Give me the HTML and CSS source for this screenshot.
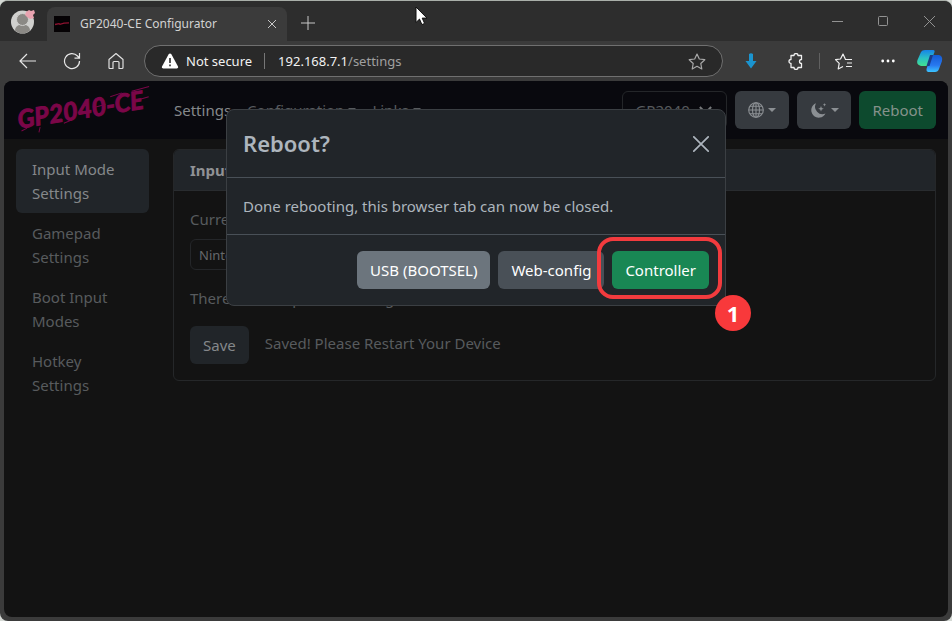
FILE: index.html
```html
<!DOCTYPE html>
<html lang="en">
<head>
<meta charset="utf-8">
<title>GP2040-CE Configurator</title>
<link rel="stylesheet" href="styles.css">
</head>
<body>
<div class="window">
  <header class="tabstrip">
    <button class="profile" aria-label="Profile">
      <svg width="26" height="26" viewBox="0 0 26 26"><circle cx="11.500" cy="14" r="11.500" fill="#d0d0ce"/><path d="M4 22.500c0-8 15-8 15 0-4 4-11 4-15 0z" fill="#8b8985"/><circle cx="11.500" cy="11.500" r="6" fill="#8b8985" stroke="#d0d0ce"/><path d="M15 4l3-2 2 1 3-1 1 3-2 2 1 3-4 1-3-2-2-2z" fill="#e9a3b0"/></svg>
    </button>
    <div class="tab">
      <svg class="favicon" width="16" height="16" viewBox="0 0 16 16"><rect width="16" height="16" fill="#050204"/><path d="M1 8.500l4-.8 1 .7 4-1.200 5-.4" stroke="#8e1230" stroke-width="1.300" fill="none"/></svg>
      <span class="tab-title">GP2040-CE Configurator</span>
      <button class="tab-close" aria-label="Close tab"><svg width="10" height="10" viewBox="0 0 10 10"><path d="M1 1l8 8M9 1l-8 8" stroke="#c8c8c8" fill="none"/></svg></button>
    </div>
    <button class="new-tab" aria-label="New tab"><svg width="14" height="14" viewBox="0 0 14 14"><path d="M7 0v14M0 7h14" stroke="#c8c8c8" fill="none"/></svg></button>
    <div class="caption">
      <button aria-label="Minimize"><svg width="11" height="11" viewBox="0 0 11 11"><path d="M0 5.500h11" stroke="#929292"/></svg></button>
      <button aria-label="Maximize"><svg width="11" height="11" viewBox="0 0 11 11"><rect x=".5" y=".5" width="9" height="9" rx="1" fill="none" stroke="#929292"/></svg></button>
      <button aria-label="Close"><svg width="11" height="11" viewBox="0 0 11 11"><path d="M0 0l11 11M11 0L0 11" stroke="#929292"/></svg></button>
    </div>
  </header>
  <div class="toolbar">
    <button aria-label="Back"><svg width="18" height="16" viewBox="0 0 18 16"><path d="M17 8H1.500M8 1L1 8l7 7" fill="none" stroke="#e6e6e6" stroke-width="1.200"/></svg></button>
    <button aria-label="Refresh"><svg width="18" height="18" viewBox="0 0 18 18"><path d="M16.500 9A7.500 7.500 0 1 1 14.500 4L16.300 6M16.500 1v5.200h-5" fill="none" stroke="#e6e6e6" stroke-width="1.200"/></svg></button>
    <button aria-label="Home"><svg width="16" height="18" viewBox="0 0 16 18"><path d="M1 7.500L8 1.500l7 6v8q0 1-1 1h-3v-6q0-1-1-1H6q-1 0-1 1v6H2q-1 0-1-1z" fill="none" stroke="#e0e0e0" stroke-width="1.200" stroke-linejoin="round"/></svg></button>
    <div class="address">
      <svg width="18" height="16" viewBox="0 0 18 16"><path d="M7.500 1.500q1.500-2 3 0l6.500 12q.7 1.800-1.200 2H2.200Q.3 15.300 1 13.500z" fill="#fff"/><path d="M9 5v5M9 11.500v1.700" stroke="#292929" stroke-width="1.600"/></svg>
      <span class="secure">Not secure</span>
      <span class="url">192.168.7.1<span class="path">/settings</span></span>
      <svg class="star" width="18" height="17" viewBox="0 0 18 17"><path d="M9 1l2.300 5 5.500.7-4 3.800 1 5.500L9 13.300 4.200 16l1-5.500-4-3.800 5.500-.7z" fill="none" stroke="#a8a8a8" stroke-width="1.200" stroke-linejoin="round"/></svg>
    </div>
    <button aria-label="Downloads"><svg width="12" height="16" viewBox="0 0 12 16"><path d="M4 1q2-1.500 4 0v7h3.500L6 15.500.5 8H4z" fill="#1b94cf"/></svg></button>
    <button aria-label="Extensions"><svg width="17" height="17" viewBox="0 0 17 17"><path d="M4 2.500h3a2 2 0 0 1 4 0h3.500v4a2 2 0 0 0 0 4v4H11a2 2 0 0 1-4 0H4v-4a2 2 0 0 1 0-4z" fill="none" stroke="#f0f0f0" stroke-width="1.300" stroke-linejoin="round"/></svg></button>
    <span class="divider"></span>
    <button aria-label="Favorites"><svg width="18" height="17" viewBox="0 0 18 17"><path d="M11 6.500h-.5L8 1 5.500 6l-5 .7 3.700 3.700-1 5.600L8 13.500M11 6.500h6M12 10h5M11 13.500h6" fill="none" stroke="#f0f0f0" stroke-width="1.200" stroke-linejoin="round"/></svg></button>
    <button aria-label="Menu"><svg width="14" height="4" viewBox="0 0 14 4"><g fill="#fff"><circle cx="1.700" cy="2" r="1.400"/><circle cx="7" cy="2" r="1.400"/><circle cx="12.300" cy="2" r="1.400"/></g></svg></button>
    <button class="copilot" aria-label="Copilot"><svg width="26" height="24" viewBox="0 0 26 24"><defs><linearGradient id="ca" x1="0" y1="0" x2="0" y2="1"><stop offset="0" stop-color="#1683e8"/><stop offset=".5" stop-color="#2abfc6"/><stop offset="1" stop-color="#42e08f"/></linearGradient><linearGradient id="cb" x1="0" y1="0" x2="0" y2="1"><stop offset="0" stop-color="#145bd4"/><stop offset=".6" stop-color="#2878ef"/><stop offset="1" stop-color="#3bc4ff"/></linearGradient></defs><path d="M8 1h8q2 0 1.500 2L13 15q-.8 2-3 2H4q-5-1-3.500-6L4 3q1-2 4-2z" fill="url(#ca)"/><path d="M17 6h5q4 1 3 6l-3 8q-1 3-4 3h-7q-2-.5-1.500-3L13 9q1-3 4-3z" fill="url(#cb)"/><path d="M13 6h3l-3.500 11h-3z" fill="#1b3c86"/></svg></button>
  </div>
  <div class="page">
    <nav class="navbar">
      <a class="logo" href="#" aria-label="GP2040-CE home"><svg width="138" height="44" viewBox="0 0 138 44"><g transform="rotate(-9 68 22)"><text x="1" y="30">GP2040-CE</text><path d="M3 33l6-2M22 32l-2 5M96 13l12-2M118 11l18-2M46 32l8-2M119 21l15-2M78 21l12-1"/></g></svg></a>
      <a class="nav-link current" href="#">Settings</a>
      <a class="nav-link" href="#">Configuration<i class="caret"></i></a>
      <a class="nav-link" href="#">Links<i class="caret"></i></a>
      <div class="nav-tools">
        <label class="select board"><select aria-label="Board"><option>GP2040</option></select></label>
        <button class="btn tool" aria-label="Language"><svg width="16" height="16" viewBox="0 0 16 16"><g fill="none" stroke="#8b8f93" stroke-width="1.100"><circle cx="8" cy="8" r="7.300"/><ellipse cx="8" cy="8" rx="3.500" ry="7.300"/><path d="M8 .7v14.600M.7 8h14.600M2 4.300h12M2 11.700h12"/></g></svg><i class="caret"></i></button>
        <button class="btn tool" aria-label="Theme"><svg width="17" height="17" viewBox="0 0 17 17"><path d="M6 1.200a7.500 7.500 0 1 0 9.500 10.300A7.400 7.400 0 0 1 6 1.200z" fill="#8b8f93"/><path d="M11 4l.8 2 2 .8-2 .8-.8 2-.8-2-2-.8 2-.8zM14.500 1l.5 1.300 1.300.5-1.300.5-.5 1.300-.5-1.300-1.300-.5 1.300-.5z" fill="#8b8f93"/></svg><i class="caret"></i></button>
        <button class="btn reboot">Reboot</button>
      </div>
    </nav>
    <main class="content">
      <nav class="sidebar">
        <a class="active" href="#">Input Mode Settings</a>
        <a href="#">Gamepad Settings</a>
        <a href="#">Boot Input Modes</a>
        <a href="#">Hotkey Settings</a>
      </nav>
      <section class="card">
        <h2>Input Mode Settings</h2>
        <form class="card-body">
          <label for="mode">Current Input Mode</label>
          <div class="select mode"><select id="mode"><option>Nintendo Switch</option></select></div>
          <p>There are no optional settings</p>
          <div class="save-row"><button class="btn save" type="button">Save</button><span>Saved! Please Restart Your Device</span></div>
        </form>
      </section>
    </main>
    <div class="modal" role="dialog" aria-labelledby="modal-title">
      <div class="modal-header">
        <h1 id="modal-title">Reboot?</h1>
        <button class="modal-close" aria-label="Close"><svg width="16" height="16" viewBox="0 0 16 16"><path d="M.8.8l14.400 14.400M15.200.8L.8 15.200" stroke="#adb5bd" stroke-width="1.700" stroke-linecap="round"/></svg></button>
      </div>
      <div class="modal-body">Done rebooting, this browser tab can now be closed.</div>
      <div class="modal-footer">
        <button class="btn usb">USB (BOOTSEL)</button>
        <button class="btn web">Web-config</button>
        <div class="marked">
          <button class="btn controller">Controller</button>
          <span class="ring"></span>
          <span class="step">1</span>
        </div>
      </div>
    </div>
  </div>
  <svg class="pointer" width="13" height="20" viewBox="0 0 13 20"><path d="M1 1v15.500l3.500-3.400 2.400 5.500 2.700-1.200-2.400-5.300H12z" fill="#fff" stroke="#111" stroke-width="1"/></svg>
</div>
</body>
</html>
```
FILE: styles.css
```css
* { box-sizing: border-box; }
body {
  margin: 0;
  background: #d5d9d5;
  font: 15px/24px "Noto Sans", sans-serif;
}
button, select { font: inherit; color: inherit; border: 0; padding: 0; background: none; }
a { color: inherit; text-decoration: none; }
svg { display: block; flex: none; }

.window {
  position: relative;
  display: flex;
  flex-direction: column;
  min-height: 100vh;
  padding: 0 4px 4px;
  background: #3b3b3b;
  border-top: 1px solid #a9afa9;
  border-radius: 8px;
  overflow: hidden;
}

.tabstrip {
  display: flex;
  align-items: stretch;
  height: 40px;
  margin: 0 -4px;
  padding-left: 11px;
  background: #2d2d2d;
}
.profile { width: 36px; }
.tab {
  display: flex;
  align-items: center;
  width: 240px;
  margin-top: 6px;
  padding: 0 10px 0 7px;
  background: #3b3b3b;
  border-radius: 8px 8px 0 0;
  color: #d2d2d2;
  font-size: 12px;
}
.tab-title { flex: 1; padding-left: 10px; white-space: nowrap; }
.new-tab { width: 42px; display: grid; place-items: center; padding-top: 4px; }
.caption { display: flex; margin-left: auto; }
.caption button { width: 46px; display: grid; place-items: center; }

.toolbar { display: flex; align-items: center; height: 40px; margin: 0 -2px; padding-left: 4px; }
.toolbar button { flex: none; width: 44px; height: 40px; display: grid; place-items: center; }
.toolbar .copilot { width: 40px; }
.divider { width: 1px; height: 16px; margin: 0 2px; background: #606060; }
.address {
  flex: 1;
  display: flex;
  align-items: center;
  height: 32px;
  margin: 0 6px;
  padding: 0 16px;
  background: #292929;
  border: 1px solid #707070;
  border-radius: 16px;
  color: #f2f2f2;
  font-size: 13px;
  line-height: 16px;
}
.secure { margin-left: 7px; padding-right: 12px; border-right: 1px solid #777; }
.url { flex: 1; padding-left: 13px; }
.path { color: #a0a0a0; }

.page {
  position: relative;
  flex: 1;
  background: #131313;
  border-radius: 8px;
  color: #585b5e;
}
.btn { height: 38px; padding: 0 13px; border-radius: 6px; white-space: nowrap; }
.navbar {
  display: flex;
  align-items: center;
  height: 58px;
  padding: 0 12px;
  background: #09090e;
  border-radius: 8px 8px 0 0;
}
.logo { width: 158px; }
.logo svg { overflow: visible; }
.logo text { font: italic 700 25px Lato, sans-serif; fill: #7b0648; stroke: #7b0648; stroke-width: 1; }
.logo path { stroke: #7b0648; stroke-width: 1; }
.nav-link { padding-right: 16px; }
.nav-link.current { color: #85888b; }
.caret {
  display: inline-block;
  margin-left: 4px;
  vertical-align: 4px;
  border: 4px solid transparent;
  border-top-color: currentColor;
  border-bottom: 0;
}
.nav-tools { display: flex; gap: 8px; margin-left: auto; }
.tool { display: flex; align-items: center; width: 54px; background: #363a3f; color: #8b8f93; }
.reboot { background: #0d4a2e; color: #85928b; }

.select { position: relative; display: block; border: 1px solid #242629; border-radius: 6px; }
.select select { display: block; width: 100%; height: 100%; padding: 0 12px; appearance: none; }
.select::after {
  content: "";
  position: absolute;
  right: 16px;
  top: 50%;
  width: 7px;
  height: 7px;
  border: solid #77797b;
  border-width: 0 2px 2px 0;
  transform: translateY(-75%) rotate(45deg);
}
.board { width: 105px; height: 38px; }
.mode { width: 208px; height: 31px; margin: 8px 0 16px; font-size: 13px; }
.mode select { padding: 0 8px; color: #65686b; }

.content { display: grid; grid-template-columns: 133px 1fr; gap: 24px; align-items: start; padding: 10px 12px; }
.sidebar a { display: block; padding: 8px 16px; border-radius: 6px; }
.sidebar .active { background: #212529; color: #85888b; }
.card { border: 1px solid #252729; border-radius: 6px; }
.card h2 {
  margin: 0;
  padding: 8px 16px;
  background: #212529;
  border-bottom: 1px solid #292c2f;
  border-radius: 5px 5px 0 0;
  color: #909295;
  font-size: 15px;
  line-height: 24px;
  font-weight: 700;
}
.card-body { padding: 16px; }
.card-body > label { display: block; }
.card-body p { margin: 0 0 16px; }
.save-row { display: flex; align-items: flex-start; gap: 16px; line-height: 34px; }
.save { background: #212529; color: #85888b; }

.modal {
  position: absolute;
  top: 28px;
  left: 0;
  right: 0;
  width: 500px;
  margin: 0 auto;
  background: #212529;
  border: 1px solid #3b3f43;
  border-radius: 8px;
  color: #adb5bd;
}
.modal-header {
  display: flex;
  align-items: center;
  justify-content: space-between;
  padding: 16px;
  border-bottom: 1px solid #495057;
}
.modal-header h1 { margin: 0; font-size: 22px; line-height: 35px; font-weight: 600; }
.modal-body { padding: 16px; border-bottom: 1px solid #495057; }
.modal-footer { display: flex; justify-content: flex-end; gap: 8px; padding: 16px; }
.modal-footer .btn { color: #fff; }
.usb { background: #6c757d; }
.web { background: #495057; }
.controller { background: #198754; }
.marked { position: relative; }
.ring {
  position: absolute;
  inset: -14px -13px -10px -15px;
  border: 4px solid #f23b3e;
  border-radius: 16px;
  pointer-events: none;
}
.step {
  position: absolute;
  right: -42px;
  top: 44px;
  width: 36px;
  height: 36px;
  background: #f8393b;
  border-radius: 50%;
  color: #fff;
  font-size: 22px;
  font-weight: 700;
  line-height: 36px;
  text-align: center;
}
.pointer { position: absolute; left: 415px; top: 5px; }
```
